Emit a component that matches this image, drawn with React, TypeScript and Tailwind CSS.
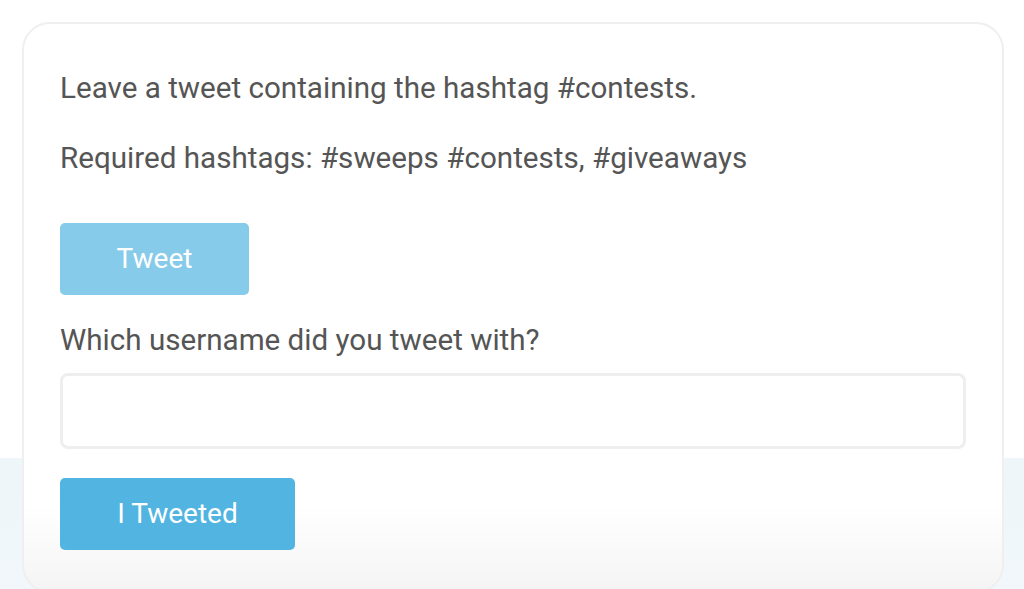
import React from "react";

export default function App() {
  return (
    <div
      className="relative w-[1024px] h-[589px] overflow-hidden bg-white"
      style={{ fontFamily: "Roboto, 'Liberation Sans', sans-serif" }}
    >
      <div className="absolute left-0 right-0 top-[458px] bottom-0 bg-gradient-to-b from-[#eef6fa] to-[#f1f7fa]" />
      <div className="relative ml-[22px] mt-[22px] w-[982px] h-[571px] rounded-[28px] border-2 border-[#efefef] bg-gradient-to-b from-white from-[85%] to-[#f4f4f4] pl-[36px] pr-[36px] pt-[46px] flex flex-col">
        <p className="text-[29.6px] leading-[36px] text-[#555555]">
          Leave a tweet containing the hashtag #contests.
        </p>
        <p className="mt-[34px] text-[29.6px] leading-[36px] text-[#555555]">
          Required hashtags: #sweeps #contests, #giveaways
        </p>
        <button className="mt-[47px] w-[189px] h-[72px] rounded-[5px] bg-[#87cbea] text-white text-[28px] font-normal">
          Tweet
        </button>
        <label className="mt-[27px] text-[29.6px] leading-[36px] text-[#555555]">
          Which username did you tweet with?
        </label>
        <input
          className="mt-[15px] w-[906px] h-[76px] rounded-[8px] border-[3px] border-[#eeeeee] bg-white outline-none"
          type="text"
        />
        <button className="mt-[29px] w-[235px] h-[72px] rounded-[5px] bg-[#52b4e0] text-white text-[28px] font-normal">
          I Tweeted
        </button>
      </div>
    </div>
  );
}
